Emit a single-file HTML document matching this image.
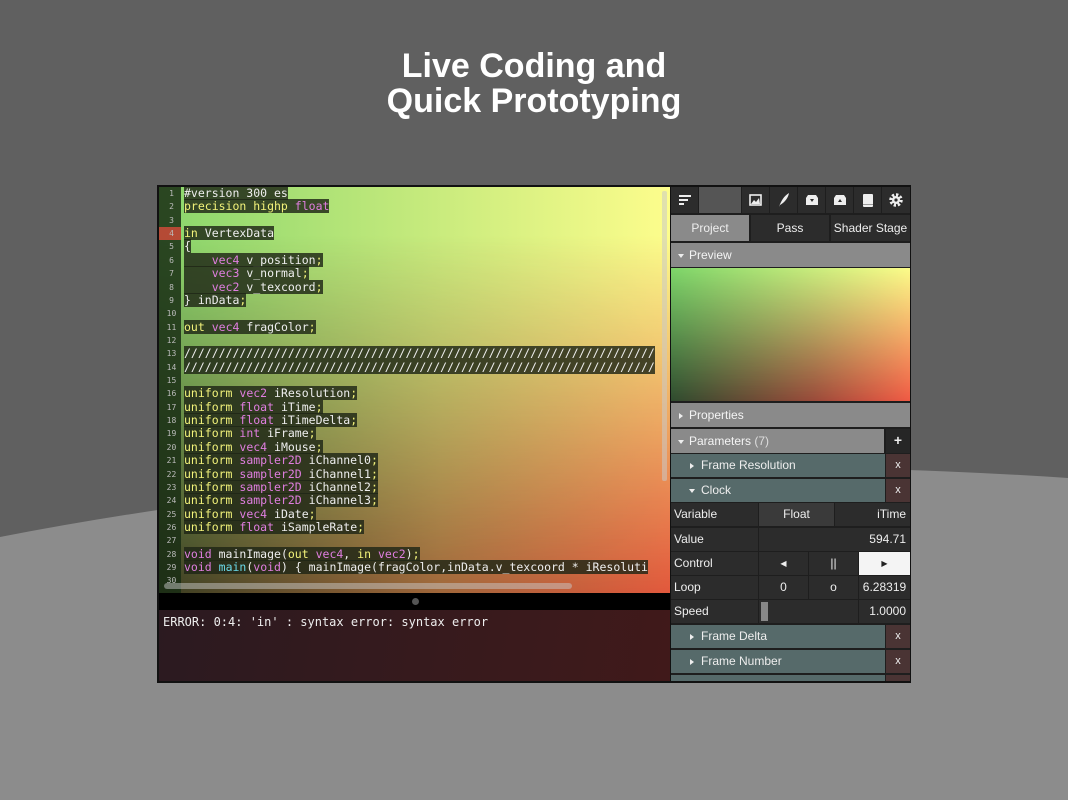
<!DOCTYPE html>
<html><head><meta charset="utf-8"><style>
*{margin:0;padding:0;box-sizing:border-box}
body{width:1068px;height:800px;overflow:hidden;background:#606060;position:relative;font-family:"Liberation Sans",sans-serif}
.abs{position:absolute}
h1{position:absolute;top:49px;left:0;width:1068px;text-align:center;color:#fff;font:bold 34px/35px "Liberation Sans",sans-serif}
#win{left:157px;top:185px;width:754px;height:498px;background:#111}
#code{left:159px;top:187px;width:511px;height:406px;overflow:hidden}
.g1{position:absolute;inset:0;background:linear-gradient(to right,#8ad66c,#fdfd8c)}
.g2{position:absolute;inset:0;background:linear-gradient(to right,#3a3e22 0%,#a0663a 55%,#e2583c 100%);-webkit-mask-image:linear-gradient(to bottom,transparent 12%,#000 100%);mask-image:linear-gradient(to bottom,transparent 12%,#000 100%)}
#gut{position:absolute;left:0;top:0;width:22px;height:406px;background:rgba(25,45,20,.85)}
.ln{position:absolute;left:0;width:22px;height:13.36px;font:8px/13.36px "DejaVu Sans Mono",monospace;color:#bbb;text-align:center;padding-left:3px}
.cl{position:absolute;left:25px;font:11.5px/13.36px "DejaVu Sans Mono","Liberation Mono",monospace;color:#eee;white-space:pre}
.cl span.b{background:rgba(30,38,22,.82)}
.k{color:#f2f27a}.t{color:#e07ee0}.cy{color:#6ad8e8}
#sep{left:159px;top:593px;width:511px;height:17px;background:#000}
#err{left:159px;top:610px;width:511px;height:71px;background:linear-gradient(100deg,#2b1a20,#3a1a1c 70%,#40191a);color:#eee;font:12px/16px "DejaVu Sans Mono",monospace;padding:4px 4px}
#rp{left:671px;top:187px;width:239px;height:494px;background:#1e1e1e;overflow:hidden;font-size:12px;color:#eee}
.row{position:absolute;left:0;width:239px}
.hdr{background:#8a8a8a;color:#f4f4f4;padding-left:18px;line-height:24px;height:24px}
.hdr::before{content:"";position:absolute;left:7px;top:10px;border:3px solid transparent}
.hdr.op::before{border-top:4px solid #eee;border-bottom:0;top:11px}
.hdr.cz::before{border-left:4px solid #eee;border-right:0;left:8px}
.par{background:#566a6a;height:23px;line-height:23px;padding-left:30px;width:214px;color:#eee}
.par::before{content:"";position:absolute;left:19px;top:9px;border:3px solid transparent}
.par.cz::before{border-left:4px solid #eee;border-right:0}
.par.op::before{border-top:4px solid #eee;border-bottom:0;top:10px;left:18px}
.x{position:absolute;left:215px;width:24px;height:23px;background:#4a3434;color:#eee;text-align:center;line-height:22px;font-size:11px}
.cell{position:absolute;height:23px;line-height:23px;background:#2c2c2c;color:#eee}
.tb{position:absolute;top:0;height:26px;width:27px;background:#2c2c2c}
</style></head><body>
<svg class="abs" style="left:0;top:0" width="1068" height="800"><path d="M0,537 Q500,440 1068,478 L1068,800 L0,800Z" fill="#8c8c8c"/></svg>
<h1>Live Coding and<br>Quick Prototyping</h1>
<div id="win" class="abs"></div>
<div id="code" class="abs">
<div class="g1"></div><div class="g2"></div>
<div id="gut"></div>
<div style="position:absolute;left:0;top:40.1px;width:22px;height:13.36px;background:#b54a35"></div>
<div id="lines"></div>
<div style="position:absolute;left:503px;top:4px;width:5px;height:290px;background:rgba(200,200,200,.55);border-radius:2px"></div>
<div style="position:absolute;left:5px;top:396px;width:408px;height:6px;background:rgba(200,200,200,.5);border-radius:3px"></div>
</div>
<div id="sep" class="abs"><div style="position:absolute;left:253px;top:5px;width:7px;height:7px;border-radius:50%;background:#555"></div></div>
<div id="err" class="abs">ERROR: 0:4: 'in' : syntax error: syntax error</div>

<div id="rp" class="abs">
 <div class="tb" style="left:0;width:27px"><svg width="27" height="26"><g stroke="#eee" stroke-width="2"><line x1="8" y1="9" x2="20" y2="9"/><line x1="8" y1="13" x2="17" y2="13"/><line x1="8" y1="17" x2="13" y2="17"/></g></svg></div>
 <div class="tb" style="left:28px;width:42px;background:#555"></div>
 <div class="tb" style="left:71px"><svg width="27" height="26"><rect x="8" y="8" width="11" height="10" fill="none" stroke="#eee" stroke-width="1.6"/><path d="M9,17 L12,13 L14,15 L17,11 L18,17Z" fill="#eee"/></svg></div>
 <div class="tb" style="left:99px"><svg width="27" height="26"><path d="M9,20 C11,14 14,9 19,6 C18,11 15,15 10,18Z" fill="#eee"/></svg></div>
 <div class="tb" style="left:127px"><svg width="27" height="26"><path d="M8,11 L10,8 L18,8 L20,11 L20,18 L8,18Z" fill="#eee"/><path d="M12,12 L16,12 L14,15Z" fill="#2c2c2c"/></svg></div>
 <div class="tb" style="left:155px"><svg width="27" height="26"><path d="M8,11 L10,8 L18,8 L20,11 L20,18 L8,18Z" fill="#eee"/><path d="M12,15 L16,15 L14,12Z" fill="#2c2c2c"/></svg></div>
 <div class="tb" style="left:183px"><svg width="27" height="26"><rect x="9" y="7" width="10" height="13" rx="1" fill="#eee"/><rect x="9" y="17" width="10" height="1" fill="#999"/></svg></div>
 <div class="tb" style="left:211px;width:28px"><svg width="28" height="26"><circle cx="14" cy="13" r="5" fill="none" stroke="#eee" stroke-width="3.5" stroke-dasharray="2.2 1.7"/><circle cx="14" cy="13" r="4" fill="#eee"/><circle cx="14" cy="13" r="1.6" fill="#2c2c2c"/></svg></div>

 <div class="cell" style="top:28px;left:0;width:78px;height:26px;line-height:26px;background:#8a8a8a;text-align:center">Project</div>
 <div class="cell" style="top:28px;left:80px;width:78px;height:26px;line-height:26px;text-align:center">Pass</div>
 <div class="cell" style="top:28px;left:160px;width:79px;height:26px;line-height:26px;text-align:center;white-space:nowrap">Shader Stage</div>

 <div class="row hdr op" style="top:56px">Preview</div>
 <div class="row" style="top:81px;height:133px;background:linear-gradient(to right,#7ed66a,#fcfc8a)"><div style="position:absolute;inset:0;background:linear-gradient(to right,#2e4a2e,#9a4a3a 60%,#f05a44);-webkit-mask-image:linear-gradient(to bottom,transparent,#000);mask-image:linear-gradient(to bottom,transparent,#000)"></div></div>
 <div class="row hdr cz" style="top:216px">Properties</div>
 <div class="row hdr op" style="top:242px;width:213px">Parameters <span style="color:#ddd">(7)</span></div>
 <div class="cell" style="top:242px;left:215px;width:24px;height:24px;background:#262626;text-align:center;font-weight:bold;font-size:14px">+</div>
 <div class="row par cz" style="top:267px">Frame Resolution</div><div class="x" style="top:267px">x</div>
 <div class="row par op" style="top:292px">Clock</div><div class="x" style="top:292px">x</div>
 <div class="cell" style="top:316px;left:0;width:87px;padding-left:3px">Variable</div>
 <div class="cell" style="top:316px;left:88px;width:75px;background:#3a3a3a;text-align:center">Float</div>
 <div class="cell" style="top:316px;left:164px;width:75px;text-align:right;padding-right:4px">iTime</div>
 <div class="cell" style="top:341px;left:0;width:87px;padding-left:3px">Value</div>
 <div class="cell" style="top:341px;left:88px;width:151px;text-align:right;padding-right:4px">594.71</div>
 <div class="cell" style="top:365px;left:0;width:87px;padding-left:3px">Control</div>
 <div class="cell" style="top:365px;left:88px;width:49px;text-align:center;font-size:8px">◀</div>
 <div class="cell" style="top:365px;left:138px;width:49px;text-align:center">||</div>
 <div class="cell" style="top:365px;left:188px;width:51px;background:#f4f4f4;color:#222;text-align:center;font-size:8px">▶</div>
 <div class="cell" style="top:389px;left:0;width:87px;padding-left:3px">Loop</div>
 <div class="cell" style="top:389px;left:88px;width:49px;text-align:center">0</div>
 <div class="cell" style="top:389px;left:138px;width:49px;text-align:center">o</div>
 <div class="cell" style="top:389px;left:188px;width:51px;text-align:center">6.28319</div>
 <div class="cell" style="top:413px;left:0;width:87px;padding-left:3px">Speed</div>
 <div class="cell" style="top:413px;left:88px;width:99px"><div style="position:absolute;left:2px;top:2px;width:7px;height:19px;background:#888"></div></div>
 <div class="cell" style="top:413px;left:188px;width:51px;text-align:right;padding-right:4px">1.0000</div>
 <div class="row par cz" style="top:438px">Frame Delta</div><div class="x" style="top:438px">x</div>
 <div class="row par cz" style="top:463px">Frame Number</div><div class="x" style="top:463px">x</div>
 <div class="row par" style="top:488px"></div><div class="x" style="top:488px"></div>
</div>
<script>
var L=[
'<span class="b">#version 300 es</span>',
'<span class="b"><span class="k">precision highp</span> <span class="t">float</span></span>',
'',
'<span class="b"><span class="k">in</span> VertexData</span>',
'<span class="b">{</span>',
'<span class="b">    <span class="t">vec4</span> v_position<span class="k">;</span></span>',
'<span class="b">    <span class="t">vec3</span> v_normal<span class="k">;</span></span>',
'<span class="b">    <span class="t">vec2</span> v_texcoord<span class="k">;</span></span>',
'<span class="b">} inData<span class="k">;</span></span>',
'',
'<span class="b"><span class="k">out</span> <span class="t">vec4</span> fragColor<span class="k">;</span></span>',
'',
'<span class="b">'+'/'.repeat(68)+'</span>',
'<span class="b">'+'/'.repeat(68)+'</span>',
'',
'<span class="b"><span class="k">uniform</span> <span class="t">vec2</span> iResolution<span class="k">;</span></span>',
'<span class="b"><span class="k">uniform</span> <span class="t">float</span> iTime<span class="k">;</span></span>',
'<span class="b"><span class="k">uniform</span> <span class="t">float</span> iTimeDelta<span class="k">;</span></span>',
'<span class="b"><span class="k">uniform</span> <span class="t">int</span> iFrame<span class="k">;</span></span>',
'<span class="b"><span class="k">uniform</span> <span class="t">vec4</span> iMouse<span class="k">;</span></span>',
'<span class="b"><span class="k">uniform</span> <span class="t">sampler2D</span> iChannel0<span class="k">;</span></span>',
'<span class="b"><span class="k">uniform</span> <span class="t">sampler2D</span> iChannel1<span class="k">;</span></span>',
'<span class="b"><span class="k">uniform</span> <span class="t">sampler2D</span> iChannel2<span class="k">;</span></span>',
'<span class="b"><span class="k">uniform</span> <span class="t">sampler2D</span> iChannel3<span class="k">;</span></span>',
'<span class="b"><span class="k">uniform</span> <span class="t">vec4</span> iDate<span class="k">;</span></span>',
'<span class="b"><span class="k">uniform</span> <span class="t">float</span> iSampleRate<span class="k">;</span></span>',
'',
'<span class="b"><span class="t">void</span> mainImage(<span class="k">out</span> <span class="t">vec4</span>, <span class="k">in</span> <span class="t">vec2</span>)<span class="k">;</span></span>',
'<span class="b"><span class="t">void</span> <span class="cy">main</span>(<span class="t">void</span>) { mainImage(fragColor,inData.v_texcoord * iResoluti</span>',
''];
var h='';
for(var i=0;i<L.length;i++){var y=(i*13.36).toFixed(2);
h+='<div class="ln" style="top:'+y+'px">'+(i+1)+'</div><div class="cl" style="top:'+y+'px">'+L[i]+'</div>';}
document.getElementById('lines').innerHTML=h;
</script>
</body></html>
